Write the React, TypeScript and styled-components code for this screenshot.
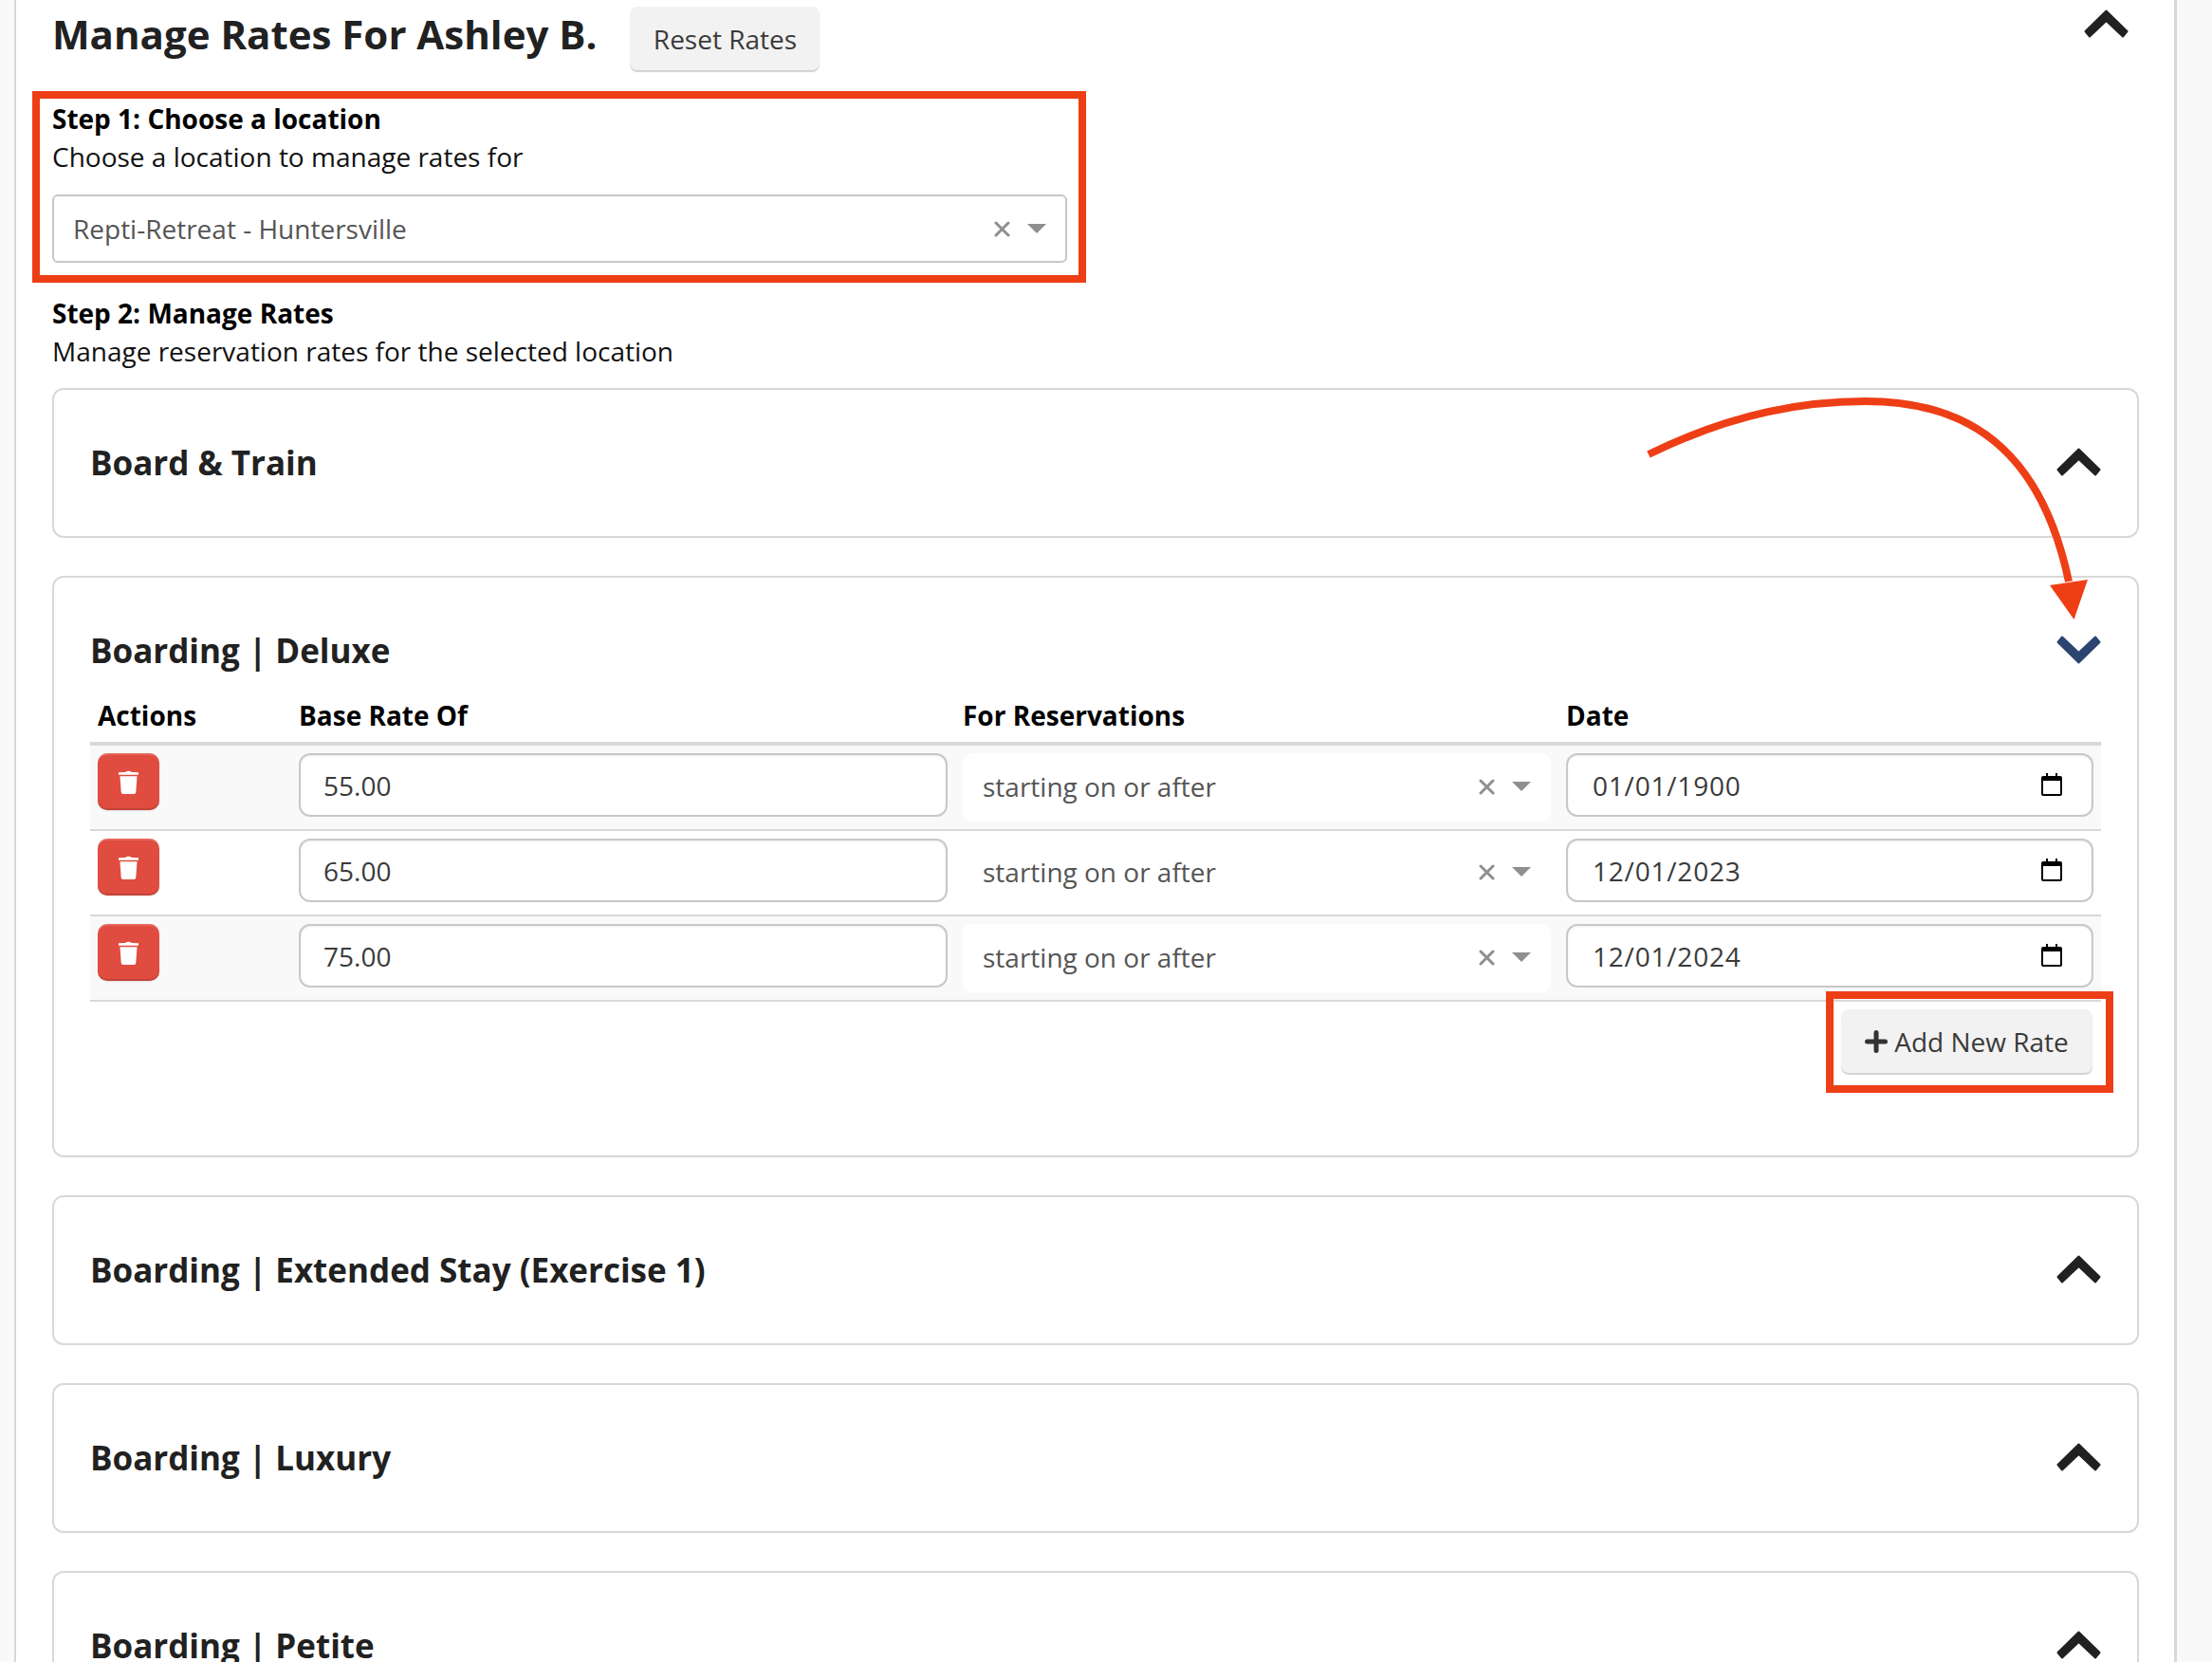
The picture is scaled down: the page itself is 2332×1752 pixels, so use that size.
import styled, { createGlobalStyle } from "styled-components";

const GlobalStyle = createGlobalStyle`
    * {
        box-sizing: border-box;
    }

    html, body {
        margin: 0;
        height: 100%;
        overflow: hidden;
        background-color: #f9f9f9;
        font-family: "Open Sans", "Noto Sans", sans-serif;
    }
`;

const Page = styled.div`
    position: relative;
    width: 2332px;
    height: 1752px;
    overflow: hidden;
    background-color: #f9f9f9;
`;

const Panel = styled.main`
    width: 2280px;
    height: 1752px;
    margin-left: 15px;
    padding: 7px 38px 0 38px;
    background-color: #fff;
    border-left: 2px solid #d8d8d8;
    border-right: 3px solid #d8d8d8;
    overflow: hidden;
`;

const TopBar = styled.div`
    display: flex;
    align-items: flex-start;
    height: 67px;
`;

const Title = styled.h1`
    flex: none;
    margin: 0;
    font-size: 42px;
    line-height: 58px;
    font-weight: 700;
    color: #212121;
`;

const GreyButton = styled.button`
    display: inline-flex;
    align-items: center;
    justify-content: center;
    height: 67px;
    border: none;
    border-radius: 8px;
    background-color: #f2f2f2;
    box-shadow: 0 2px 1px rgba(0, 0, 0, 0.18);
    font-family: inherit;
    font-size: 28px;
    color: #3a3a3a;
`;

const ResetButton = styled(GreyButton)`
    width: 200px;
    margin-left: 35px;
`;

const TopChevron = styled.div`
    margin: 3px 10px 0 auto;
    line-height: 0;
`;

const StepOneBox = styled.section`
    width: 1111px;
    height: 202px;
    margin: 22px 0 0 -21px;
    padding: 1px 12px 0 13px;
    border: 8px solid #ee3e16;
`;

const StepHeading = styled.div`
    font-size: 28px;
    line-height: 40px;
    font-weight: 700;
    color: #000;
`;

const StepText = styled.div`
    font-size: 28px;
    line-height: 40px;
    color: #111;
`;

const LocationSelect = styled.div`
    display: flex;
    align-items: center;
    height: 72px;
    margin-top: 20px;
    padding: 0 20px 0 20px;
    border: 2px solid #c6c6c6;
    border-radius: 6px;
    font-size: 28px;
    color: #555;
`;

const SelectValue = styled.span`
    flex: 1;
`;

const SelectIcons = styled.span`
    display: flex;
    align-items: center;
    gap: 18px;
    line-height: 0;
`;

const StepTwo = styled.section`
    margin-top: 12px;
`;

const Cards = styled.div`
    display: flex;
    flex-direction: column;
    gap: 40px;
    width: 2200px;
    margin-top: 19px;
`;

const Card = styled.section<{ $height: number }>`
    flex: none;
    height: ${props => props.$height}px;
    padding: 0 38px;
    border: 2px solid #d8d8d8;
    border-radius: 12px;
    background-color: #fff;
`;

const CardHeader = styled.div<{ $open?: boolean }>`
    display: flex;
    align-items: center;
    justify-content: space-between;
    height: ${props => (props.$open ? 104 : 151)}px;
    padding-top: ${props => (props.$open ? 48 : 0)}px;
`;

const CardTitle = styled.h2`
    margin: 0;
    padding-top: 2px;
    font-size: 35px;
    line-height: 50px;
    font-weight: 700;
    color: #212121;
`;

const RatesTable = styled.div`
    display: flex;
    flex-direction: column;
`;

const RateRow = styled.div<{ $striped?: boolean }>`
    display: grid;
    grid-template-columns: 212px 700px 636px 572px;
    height: 90px;
    padding-top: 8px;
    background-color: ${props => (props.$striped ? "#f9f9f9" : "#fff")};
    border-bottom: 2px solid #d8d8d8;
`;

const HeaderRow = styled.div`
    display: grid;
    grid-template-columns: 212px 700px 636px 572px;
    height: 73px;
    padding-top: 21px;
    border-bottom: 4px solid #d8d8d8;
`;

const HeaderCell = styled.div`
    padding-left: 8px;
    font-size: 28px;
    line-height: 40px;
    font-weight: 700;
    color: #000;
`;

const Cell = styled.div`
    padding: 0 8px;
`;

const TrashButton = styled.button`
    display: flex;
    align-items: center;
    justify-content: center;
    width: 65px;
    height: 60px;
    padding: 0;
    border: none;
    border-radius: 10px;
    background-color: #e04c3f;
    box-shadow: inset 0 2px 0 rgba(255, 255, 255, 0.16), inset 0 -2px 0 rgba(0, 0, 0, 0.12), 0 1px 2px rgba(0, 0, 0, 0.1);
`;

const TextField = styled.div`
    display: flex;
    align-items: center;
    justify-content: space-between;
    height: 67px;
    padding: 0 31px 0 24px;
    border: 2px solid #c8c8c8;
    border-radius: 12px;
    background-color: #fff;
    box-shadow: inset 0 1px 2px rgba(0, 0, 0, 0.08);
    font-size: 28px;
    color: #3a3a3a;
`;

const DateValue = styled.span`
    margin-left: 2px;
    letter-spacing: 0.8px;
`;

const ReservationSelect = styled.div`
    display: flex;
    align-items: center;
    height: 72px;
    padding: 0 21px 2px 21px;
    border-radius: 10px;
    background-color: #fff;
    font-size: 28px;
    color: #555;
`;

const CalendarIcon = styled.span`
    line-height: 0;
    margin-top: -2px;
`;

const AddRow = styled.div`
    display: flex;
    justify-content: flex-end;
    margin: -11px -13px 0 0;
`;

const AddRateBox = styled.div`
    position: relative;
    width: 303px;
    height: 107px;
    padding: 11px 14px 0 8px;
    border: 8px solid #ee3e16;
`;

const AddRateButton = styled(GreyButton)`
    width: 100%;
    gap: 7px;
`;

const ArrowOverlay = styled.svg`
    position: absolute;
    left: 0;
    top: 0;
    pointer-events: none;
`;

function Chevron({ up = true, color = "#212121" }: { up?: boolean; color?: string }) {
    return (
        <svg width="47" height="30" viewBox="0 0 47 30">
            <path
                d="M23.5 1.5 L45.5 23 L41 28.5 L23.5 12 L6 28.5 L1.5 23 Z"
                fill={color}
                stroke={color}
                strokeWidth="2"
                strokeLinejoin="round"
                transform={up ? undefined : "rotate(180 23.5 15)"}
            />
        </svg>
    );
}

function ClearIcon() {
    return (
        <svg width="17" height="17" viewBox="0 0 17 17">
            <path d="M2 2 L15 15 M15 2 L2 15" stroke="#8f8f8f" strokeWidth="3" strokeLinecap="round" />
        </svg>
    );
}

function Caret() {
    return (
        <svg width="20" height="10" viewBox="0 0 20 10">
            <path d="M0 0 H20 L10 10 Z" fill="#8f8f8f" />
        </svg>
    );
}

function TrashIcon() {
    return (
        <svg width="21" height="25" viewBox="0 0 21 25">
            <path d="M7 2 Q10.500 -0.500 14 2 L21 2.300 V4.800 H0 V2.300 Z" fill="#fff" />
            <path d="M1.500 6.300 H19.500 L18.300 23 Q18.200 25 16.200 25 H4.800 Q2.800 25 2.700 23 Z" fill="#fff" />
        </svg>
    );
}

function Calendar() {
    return (
        <svg width="22" height="24" viewBox="0 0 22 24">
            <path d="M5 0 H7 V3 H15 V0 H17 V3 H20 Q22 3 22 5 V22 Q22 24 20 24 H2 Q0 24 0 22 V5 Q0 3 2 3 H5 Z" fill="#000" />
            <rect x="2" y="8" width="18" height="14" fill="#fff" />
        </svg>
    );
}

function PlusIcon() {
    return (
        <svg width="24" height="24" viewBox="0 0 24 24">
            <path d="M12 2.500 V21.500 M2.500 12 H21.500" stroke="#333" strokeWidth="5" strokeLinecap="round" />
        </svg>
    );
}

const rates = [
    { amount: "55.00", date: "01/01/1900" },
    { amount: "65.00", date: "12/01/2023" },
    { amount: "75.00", date: "12/01/2024" },
];

const closedCards = [
    "Boarding | Extended Stay (Exercise 1)",
    "Boarding | Luxury",
    "Boarding | Petite",
];

export default function App() {
    return (
        <Page>
            <GlobalStyle />
            <Panel>
                <TopBar>
                    <Title>Manage Rates For Ashley B.</Title>
                    <ResetButton>Reset Rates</ResetButton>
                    <TopChevron><Chevron /></TopChevron>
                </TopBar>

                <StepOneBox>
                    <StepHeading>Step 1: Choose a location</StepHeading>
                    <StepText>Choose a location to manage rates for</StepText>
                    <LocationSelect>
                        <SelectValue>Repti-Retreat - Huntersville</SelectValue>
                        <SelectIcons><ClearIcon /><Caret /></SelectIcons>
                    </LocationSelect>
                </StepOneBox>

                <StepTwo>
                    <StepHeading>Step 2: Manage Rates</StepHeading>
                    <StepText>Manage reservation rates for the selected location</StepText>
                </StepTwo>

                <Cards>
                    <Card $height={158}>
                        <CardHeader>
                            <CardTitle>Board &amp; Train</CardTitle>
                            <Chevron />
                        </CardHeader>
                    </Card>

                    <Card $height={613}>
                        <CardHeader $open>
                            <CardTitle>Boarding | Deluxe</CardTitle>
                            <Chevron up={false} color="#2b4570" />
                        </CardHeader>
                        <RatesTable>
                            <HeaderRow>
                                <HeaderCell>Actions</HeaderCell>
                                <HeaderCell>Base Rate Of</HeaderCell>
                                <HeaderCell>For Reservations</HeaderCell>
                                <HeaderCell>Date</HeaderCell>
                            </HeaderRow>
                            {rates.map((rate, index) => (
                                <RateRow key={rate.date} $striped={index % 2 === 0}>
                                    <Cell>
                                        <TrashButton><TrashIcon /></TrashButton>
                                    </Cell>
                                    <Cell>
                                        <TextField>{rate.amount}</TextField>
                                    </Cell>
                                    <Cell>
                                        <ReservationSelect>
                                            <SelectValue>starting on or after</SelectValue>
                                            <SelectIcons><ClearIcon /><Caret /></SelectIcons>
                                        </ReservationSelect>
                                    </Cell>
                                    <Cell>
                                        <TextField>
                                            <DateValue>{rate.date}</DateValue>
                                            <CalendarIcon><Calendar /></CalendarIcon>
                                        </TextField>
                                    </Cell>
                                </RateRow>
                            ))}
                        </RatesTable>
                        <AddRow>
                            <AddRateBox>
                                <AddRateButton><PlusIcon />Add New Rate</AddRateButton>
                            </AddRateBox>
                        </AddRow>
                    </Card>

                    {closedCards.map(name => (
                        <Card key={name} $height={158}>
                            <CardHeader>
                                <CardTitle>{name}</CardTitle>
                                <Chevron />
                            </CardHeader>
                        </Card>
                    ))}
                </Cards>
            </Panel>

            <ArrowOverlay width="2332" height="1752" viewBox="0 0 2332 1752">
                <path
                    d="M1738 479 C1830 434 1905 423 1967 423 C2090 423 2155 490 2181 613"
                    fill="none"
                    stroke="#ee3e16"
                    strokeWidth="8"
                />
                <path d="M2161 617 L2201 611 L2186.500 653 Z" fill="#ee3e16" />
            </ArrowOverlay>
        </Page>
    );
}
